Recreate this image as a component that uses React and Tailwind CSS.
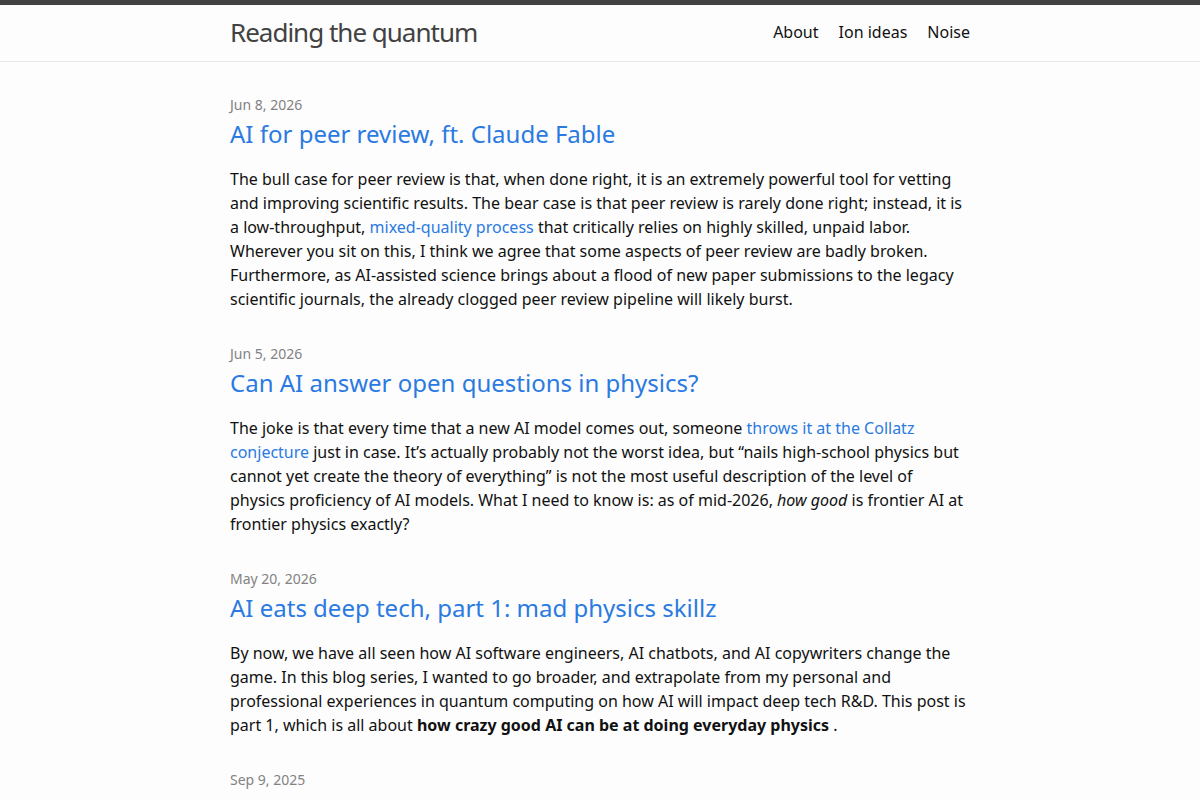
export default function App() {
  const link = "text-[#2a7ae2] no-underline";
  const date = "text-sm leading-5 text-[#828282]";
  const title = "text-2xl leading-[38px] text-[#2a7ae2]";
  return (
    <div className="min-h-screen bg-[#fdfdfd] text-[#111] font-['Noto_Sans',sans-serif] text-base leading-6">
      <header className="border-t-[5px] border-t-[#424242] border-b border-b-[#e8e8e8] bg-[#fdfdfd]">
        <div className="mx-auto w-[740px] h-[56px] pb-0.5 flex items-center justify-between">
          <a className="text-[26px] font-normal tracking-[-1px] text-[#424242] leading-[40px]">Reading the quantum</a>
          <nav className="flex gap-5 text-base text-[#111] leading-6">
            <a>About</a>
            <a>Ion ideas</a>
            <a>Noise</a>
          </nav>
        </div>
      </header>
      <main className="mx-auto w-[740px] pt-[33px]">
        <article>
          <div className={date}>Jun 8, 2026</div>
          <h3 className={title}>AI for peer review, ft. Claude Fable</h3>
          <p className="mt-[14px]">
            The bull case for peer review is that, when done right, it is an extremely powerful tool for vetting
            and improving scientific results. The bear case is that peer review is rarely done right; instead, it is
            a low-throughput, <a className={link}>mixed-quality process</a> that critically relies on highly skilled, unpaid labor.
            Wherever you sit on this, I think we agree that some aspects of peer review are badly broken.
            Furthermore, as AI-assisted science brings about a flood of new paper submissions to the legacy
            scientific journals, the already clogged peer review pipeline will likely burst.
          </p>
        </article>
        <article className="mt-[33px]">
          <div className={date}>Jun 5, 2026</div>
          <h3 className={title}>Can AI answer open questions in physics?</h3>
          <p className="mt-[14px]">
            The joke is that every time that a new AI model comes out, someone <a className={link}>throws it at the Collatz
            conjecture</a> just in case. It’s actually probably not the worst idea, but “nails high-school physics but
            cannot yet create the theory of everything” is not the most useful description of the level of
            physics proficiency of AI models. What I need to know is: as of mid-2026, <em>how good</em> is frontier AI at
            frontier physics exactly?
          </p>
        </article>
        <article className="mt-[33px]">
          <div className={date}>May 20, 2026</div>
          <h3 className={title}>AI eats deep tech, part 1: mad physics skillz</h3>
          <p className="mt-[14px]">
            By now, we have all seen how AI software engineers, AI chatbots, and AI copywriters change the
            game. In this blog series, I wanted to go broader, and extrapolate from my personal and
            professional experiences in quantum computing on how AI will impact deep tech R&amp;D. This post is
            part 1, which is all about <strong>how crazy good AI can be at doing everyday physics</strong> .
          </p>
        </article>
        <article className="mt-[33px]">
          <div className={date}>Sep 9, 2025</div>
          <h3 className={title}>Building a quantum computer, one ion at a time</h3>
        </article>
      </main>
    </div>
  );
}
